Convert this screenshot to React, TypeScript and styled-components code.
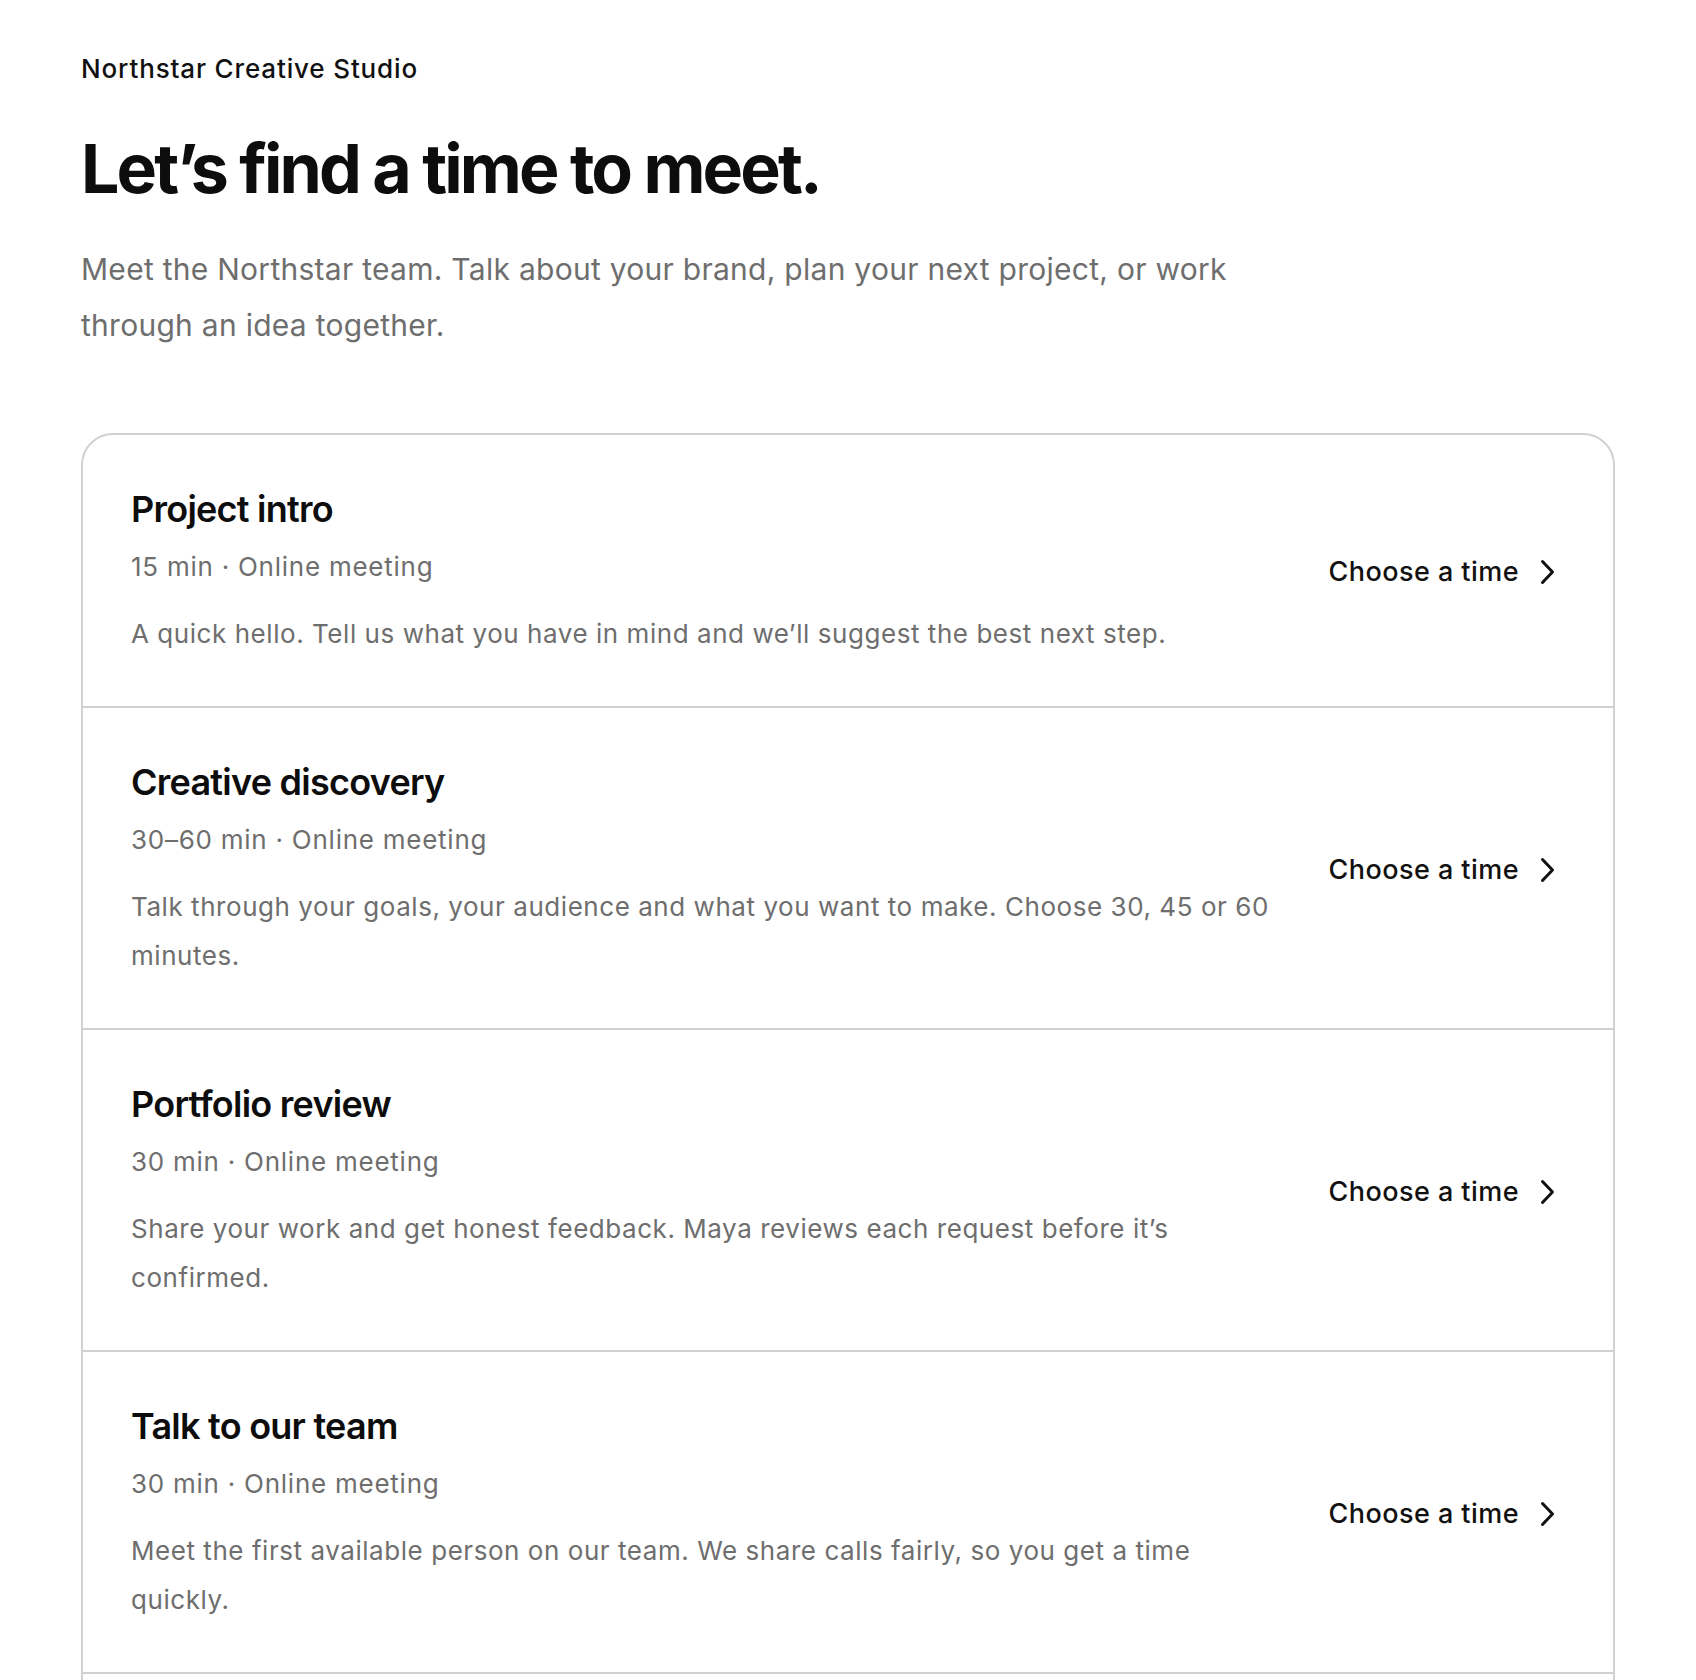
import React from "react";
import styled, { createGlobalStyle } from "styled-components";

const GlobalStyle = createGlobalStyle`
  html, body {
    margin: 0;
    padding: 0;
    background: #ffffff;
  }
  body {
    font-family: Inter, "Noto Sans", "Liberation Sans", sans-serif;
    color: #1d1d1f;
    -webkit-font-smoothing: antialiased;
  }
  * { box-sizing: border-box; }
`;

const Page = styled.main`
  padding: 52px 81px 80px 81px;
  display: flex;
  flex-direction: column;
`;

const Studio = styled.div`
  font-size: 26px;
  line-height: 34px;
  font-weight: 500;
  color: #111111;
  letter-spacing: 0.85px;
`;

const Heading = styled.h1`
  margin: 43px 0 0 0;
  font-size: 68px;
  line-height: 79px;
  font-weight: 700;
  letter-spacing: -2.85px;
  color: #0d0d0d;
`;

const Intro = styled.p`
  margin: 33px 0 0 0;
  max-width: 1190px;
  font-size: 30px;
  line-height: 56px;
  font-weight: 400;
  color: #6e6e6e;
  letter-spacing: 0.27px;
`;

const Card = styled.section`
  margin-top: 80px;
  border: 2px solid #d1d1d1;
  border-radius: 32px;
  overflow: hidden;
  display: flex;
  flex-direction: column;
`;

const Row = styled.a`
  display: flex;
  align-items: center;
  gap: 48px;
  padding: 51px 48px 48px 48px;
  text-decoration: none;
  color: inherit;
  & + & {
    border-top: 2px solid #d1d1d1;
  }
`;

const Info = styled.div`
  flex: 1 1 auto;
  min-width: 0;
  max-width: 1150px;
  display: flex;
  flex-direction: column;
`;

const Title = styled.h2`
  margin: 0;
  font-size: 36px;
  line-height: 46px;
  font-weight: 600;
  letter-spacing: -0.75px;
  color: #0d0d0d;
`;

const Meta = styled.div`
  margin-top: 17px;
  font-size: 26px;
  line-height: 36px;
  color: #6e6e6e;
  letter-spacing: 0.75px;
`;

const Description = styled.p`
  margin: 24px 0 0 0;
  font-size: 26px;
  line-height: 49px;
  color: #6e6e6e;
  letter-spacing: 0.55px;
`;

const Action = styled.span`
  margin-left: auto;
  flex: 0 0 auto;
  display: inline-flex;
  align-items: center;
  gap: 20px;
  padding-right: 9px;
  font-size: 27px;
  line-height: 36px;
  font-weight: 500;
  color: #111111;
  letter-spacing: 0.45px;
`;

const Chevron = styled.svg`
  width: 17px;
  height: 26px;
  flex: 0 0 auto;
`;

type EventType = {
  title: string;
  meta: string;
  description: string;
};

const events: EventType[] = [
  {
    title: "Project intro",
    meta: "15 min · Online meeting",
    description:
      "A quick hello. Tell us what you have in mind and we’ll suggest the best next step.",
  },
  {
    title: "Creative discovery",
    meta: "30–60 min · Online meeting",
    description:
      "Talk through your goals, your audience and what you want to make. Choose 30, 45 or 60 minutes.",
  },
  {
    title: "Portfolio review",
    meta: "30 min · Online meeting",
    description:
      "Share your work and get honest feedback. Maya reviews each request before it’s confirmed.",
  },
  {
    title: "Talk to our team",
    meta: "30 min · Online meeting",
    description:
      "Meet the first available person on our team. We share calls fairly, so you get a time quickly.",
  },
  {
    title: "Brand workshop",
    meta: "90 min · In person",
    description:
      "A hands-on session at the studio to shape your brand story with our designers.",
  },
];

export default function App() {
  return (
    <>
      <GlobalStyle />
      <Page>
        <Studio>Northstar Creative Studio</Studio>
        <Heading>Let’s find a time to meet.</Heading>
        <Intro>
          Meet the Northstar team. Talk about your brand, plan your next
          project, or work through an idea together.
        </Intro>
        <Card>
          {events.map((e) => (
            <Row key={e.title} href="#">
              <Info>
                <Title>{e.title}</Title>
                <Meta>{e.meta}</Meta>
                <Description>{e.description}</Description>
              </Info>
              <Action>
                Choose a time
                <Chevron viewBox="0 0 17 26" aria-hidden="true">
                  <path
                    d="M3.5 2.5 L13.5 13 L3.5 23.5"
                    fill="none"
                    stroke="#111111"
                    strokeWidth="3"
                    strokeLinecap="round"
                    strokeLinejoin="round"
                  />
                </Chevron>
              </Action>
            </Row>
          ))}
        </Card>
      </Page>
    </>
  );
}
